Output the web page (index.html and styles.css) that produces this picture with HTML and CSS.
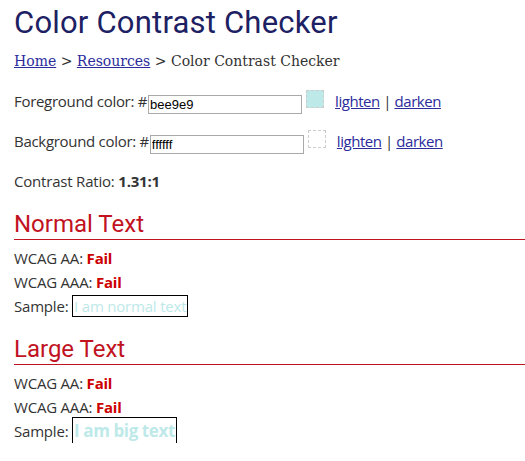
FILE: index.html
```html
<!DOCTYPE html>
<html>
<head>
<meta charset="utf-8">
<link rel="stylesheet" href="styles.css">
</head>
<body>
<div class="page">
  <h1 class="title">Color Contrast Checker</h1>
  <p class="crumbs"><a href="#">Home</a> &gt; <a href="#">Resources</a> &gt; Color Contrast Checker</p>

  <div class="color-row first">
    <label class="lbl">Foreground color: #</label><input class="hex" type="text" value="bee9e9"><span class="swatch fg"></span><span class="links"><a href="#">lighten</a> | <a href="#">darken</a></span>
  </div>
  <div class="color-row">
    <label class="lbl">Background color: #</label><input class="hex" type="text" value="ffffff"><span class="swatch bg"></span><span class="links"><a href="#">lighten</a> | <a href="#">darken</a></span>
  </div>

  <p class="ratio">Contrast Ratio: <b>1.31:1</b></p>

  <h2 class="section">Normal Text</h2>
  <p class="line first">WCAG AA: <b class="fail">Fail</b></p>
  <p class="line">WCAG AAA: <b class="fail">Fail</b></p>
  <p class="line">Sample: <span class="sample normal">I am normal text</span></p>

  <h2 class="section large">Large Text</h2>
  <p class="line first">WCAG AA: <b class="fail">Fail</b></p>
  <p class="line">WCAG AAA: <b class="fail">Fail</b></p>
  <p class="line">Sample: <span class="sample big">I am big text</span></p>
</div>
</body>
</html>
```
FILE: styles.css
```css
html, body {
  margin: 0;
  padding: 0;
  background: #ffffff;
}
body {
  font-family: "Open Sans", "Noto Sans", sans-serif;
  font-size: 15px;
  letter-spacing: -0.2px;
  color: #333333;
}
.page {
  padding: 5px 0 0 14px;
}
.title {
  font-family: Roboto, sans-serif;
  font-weight: 400;
  font-size: 31px;
  letter-spacing: 0.2px;
  line-height: 36px;
  color: #1d2163;
  margin: 0;
}
.crumbs {
  font-family: "DejaVu Serif", serif;
  font-size: 14px;
  letter-spacing: 0;
  line-height: 20px;
  margin: 10px 0 0 0;
  color: #333333;
}
a {
  color: #2b2b9c;
}
.color-row {
  display: flex;
  align-items: flex-start;
  height: 24px;
  margin-top: 16px;
}
.color-row.first {
  margin-top: 19px;
}
.lbl {
  line-height: 20px;
  margin-top: 1px;
  white-space: pre;
  letter-spacing: -0.3px;
}
.hex {
  font-family: "Liberation Sans", Arial, sans-serif;
  font-size: 13px;
  letter-spacing: 0;
  width: 150px;
  height: 17px;
  box-sizing: content-box;
  padding: 0 1px;
  margin: 5px 0 0 1px;
  border: 1px solid #a9a9a9;
  outline: none;
  color: #000;
}
.swatch {
  width: 16px;
  height: 16px;
  border: 1px dashed #cccccc;
  margin-left: 4px;
}
.swatch.fg { background: #bee9e9; }
.swatch.bg { background: #ffffff; }
.links {
  margin-left: 11px;
  line-height: 20px;
  margin-top: 1px;
  letter-spacing: -0.45px;
}
.ratio {
  margin: 17px 0 0 0;
  line-height: 20px;
}
.section {
  font-family: Roboto, sans-serif;
  font-weight: 400;
  font-size: 24px;
  letter-spacing: 0;
  line-height: 30px;
  color: #c1121f;
  margin: 18px 0 0 0;
  border-bottom: 1px solid #c1121f;
}
.section.large {
  margin-top: 16px;
}
.line {
  margin: 0;
  line-height: 24px;
}
.line.first {
  margin-top: 6px;
}
.fail {
  color: #cc0000;
}
.sample {
  color: #bee9e9;
  border: 1px solid #000;
  padding: 0 1px;
}
.sample.big {
  font-size: 17px;
  letter-spacing: -0.4px;
  padding: 1px 1px;
  font-weight: 700;
}
```
